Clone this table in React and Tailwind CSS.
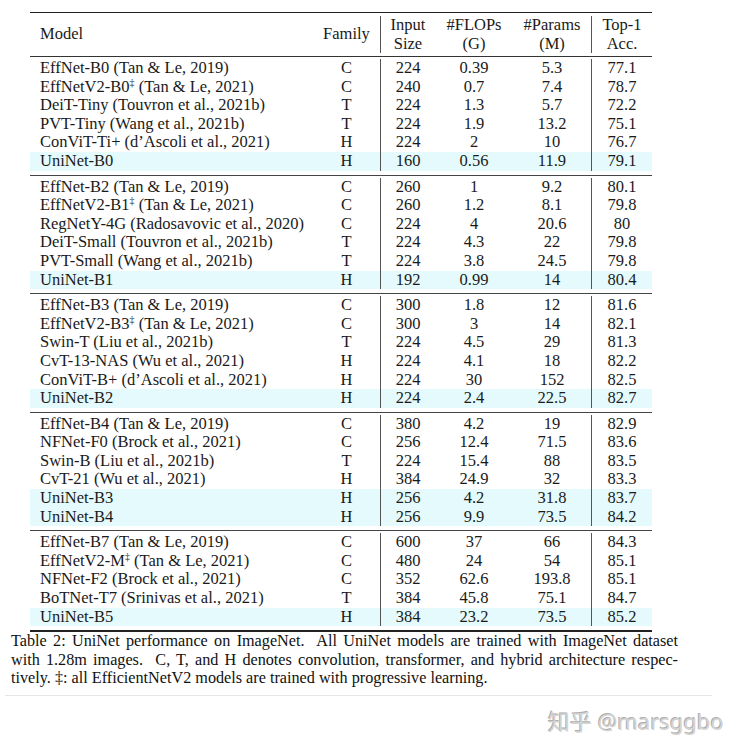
import React from "react";

const groups = [
  [
    ["EffNet-B0 (Tan & Le, 2019)", "C", "224", "0.39", "5.3", "77.1"],
    ["EffNetV2-B0|(Tan & Le, 2021)", "C", "240", "0.7", "7.4", "78.7"],
    ["DeiT-Tiny (Touvron et al., 2021b)", "T", "224", "1.3", "5.7", "72.2"],
    ["PVT-Tiny (Wang et al., 2021b)", "T", "224", "1.9", "13.2", "75.1"],
    ["ConViT-Ti+ (d\u2019Ascoli et al., 2021)", "H", "224", "2", "10", "76.7"],
    ["UniNet-B0", "H", "160", "0.56", "11.9", "79.1", true],
  ],
  [
    ["EffNet-B2 (Tan & Le, 2019)", "C", "260", "1", "9.2", "80.1"],
    ["EffNetV2-B1|(Tan & Le, 2021)", "C", "260", "1.2", "8.1", "79.8"],
    ["RegNetY-4G (Radosavovic et al., 2020)", "C", "224", "4", "20.6", "80"],
    ["DeiT-Small (Touvron et al., 2021b)", "T", "224", "4.3", "22", "79.8"],
    ["PVT-Small (Wang et al., 2021b)", "T", "224", "3.8", "24.5", "79.8"],
    ["UniNet-B1", "H", "192", "0.99", "14", "80.4", true],
  ],
  [
    ["EffNet-B3 (Tan & Le, 2019)", "C", "300", "1.8", "12", "81.6"],
    ["EffNetV2-B3|(Tan & Le, 2021)", "C", "300", "3", "14", "82.1"],
    ["Swin-T (Liu et al., 2021b)", "T", "224", "4.5", "29", "81.3"],
    ["CvT-13-NAS (Wu et al., 2021)", "H", "224", "4.1", "18", "82.2"],
    ["ConViT-B+ (d\u2019Ascoli et al., 2021)", "H", "224", "30", "152", "82.5"],
    ["UniNet-B2", "H", "224", "2.4", "22.5", "82.7", true],
  ],
  [
    ["EffNet-B4 (Tan & Le, 2019)", "C", "380", "4.2", "19", "82.9"],
    ["NFNet-F0 (Brock et al., 2021)", "C", "256", "12.4", "71.5", "83.6"],
    ["Swin-B (Liu et al., 2021b)", "T", "224", "15.4", "88", "83.5"],
    ["CvT-21 (Wu et al., 2021)", "H", "384", "24.9", "32", "83.3"],
    ["UniNet-B3", "H", "256", "4.2", "31.8", "83.7", true],
    ["UniNet-B4", "H", "256", "9.9", "73.5", "84.2", true],
  ],
  [
    ["EffNet-B7 (Tan & Le, 2019)", "C", "600", "37", "66", "84.3"],
    ["EffNetV2-M|(Tan & Le, 2021)", "C", "480", "24", "54", "85.1"],
    ["NFNet-F2 (Brock et al., 2021)", "C", "352", "62.6", "193.8", "85.1"],
    ["BoTNet-T7 (Srinivas et al., 2021)", "T", "384", "45.8", "75.1", "84.7"],
    ["UniNet-B5", "H", "384", "23.2", "73.5", "85.2", true],
  ],
];

const cols = "grid grid-cols-[283px_68px_54px_78px_79px_60px]";

function ModelName({ name }) {
  // "|" marks where the double dagger goes
  if (!name.includes("|")) return name;
  const [a, b] = name.split("|");
  return (
    <>
      {a}
      <sup className="text-[10px] -top-[6px]">{"\u2021"}</sup> {b}
    </>
  );
}

function Row({ r }) {
  const hl = r[6];
  return (
    <div className={`${cols} h-[18.6px] leading-[18.6px] ${hl ? "bg-[#e4fafc]" : ""}`}>
      <div className="pl-[10px] whitespace-nowrap">
        <ModelName name={r[0]} />
      </div>
      <div className="text-center border-r border-[#555]">{r[1]}</div>
      <div className="text-center">{r[2]}</div>
      <div className="text-center">{r[3]}</div>
      <div className="text-center border-r border-[#555]">{r[4]}</div>
      <div className="text-center">{r[5]}</div>
    </div>
  );
}

export default function App() {
  return (
    <div
      className="w-[739px] h-[753px] bg-white text-[#1a1a1a] overflow-hidden"
      style={{ fontFamily: '"Liberation Serif", "Times New Roman", serif' }}
    >
      <div className="pt-[12px] pl-[30px]">
        <div className="w-[622px] text-[16.5px] border-t-[1.5px] border-[#222]">
          {/* header */}
          <div className={`${cols} py-[3px] leading-[18.5px] border-b border-[#333]`}>
            <div className="pl-[10px] flex items-center">Model</div>
            <div className="flex items-center justify-center border-r border-[#555]">Family</div>
            <div className="text-center">
              Input
              <br />
              Size
            </div>
            <div className="text-center">
              #FLOPs
              <br />
              (G)
            </div>
            <div className="text-center border-r border-[#555]">
              #Params
              <br />
              (M)
            </div>
            <div className="text-center">
              Top-1
              <br />
              Acc.
            </div>
          </div>

          {groups.map((g, i) => (
            <div
              key={i}
              className={`pt-[2px] pb-[4px] ${
                i === groups.length - 1 ? "border-b-2 border-[#222]" : "border-b-[1.5px] border-[#444]"
              }`}
            >
              {g.map((r, j) => (
                <Row key={j} r={r} />
              ))}
            </div>
          ))}
        </div>
      </div>

      {/* caption, set line by line like the typeset original */}
      <div className="ml-[11px] w-[667px] text-[16.2px] leading-[18.5px] text-[#111] whitespace-nowrap">
        <div className="text-justify [text-align-last:justify]">
          Table 2: UniNet performance on ImageNet.&nbsp; All UniNet models are trained with ImageNet dataset
        </div>
        <div className="text-justify [text-align-last:justify]">
          with 1.28m images.&nbsp; C, T, and H denotes convolution, transformer, and hybrid architecture respec-
        </div>
        <div>tively. {"\u2021"}: all EfficientNetV2 models are trained with progressive learning.</div>
      </div>

      <div className="mt-[7px] ml-[5px] w-[707px] h-px bg-[#e6e6e6]" />

      <div className="mt-[12px] pl-[548px]">
        <span
          className="text-[22px] leading-[26px] text-[#d4d4d4] [text-shadow:-1px_-1px_0_#adadad] whitespace-nowrap"
          style={{ fontFamily: '"Noto Sans", "Noto Sans CJK SC", sans-serif' }}
        >
          知乎 @marsggbo
        </span>
      </div>
    </div>
  );
}
